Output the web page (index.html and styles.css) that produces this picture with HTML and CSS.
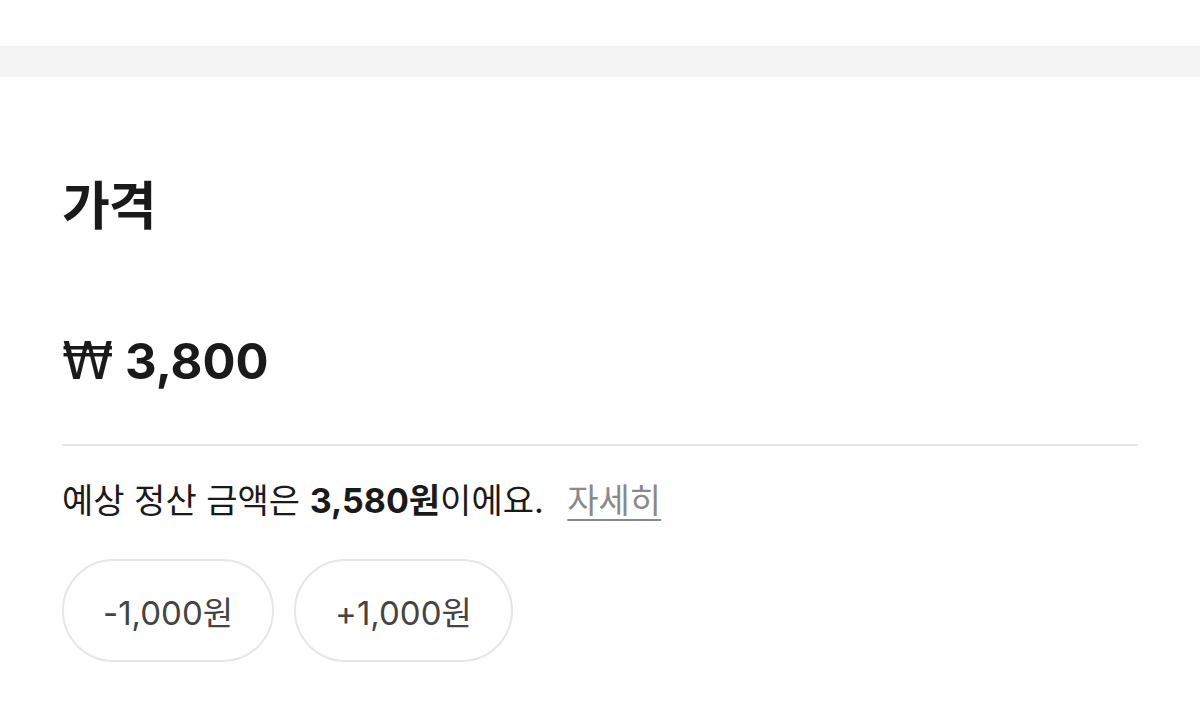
FILE: index.html
```html
<!DOCTYPE html>
<html lang="ko">
<head>
<meta charset="utf-8">
<link rel="stylesheet" href="styles.css">
</head>
<body>
<div class="top"></div>
<div class="band"></div>
<section class="price">
  <h2 class="title">가격</h2>
  <div class="amount"><span class="won">₩</span> 3,800</div>
  <hr class="divider">
  <p class="note">예상 정산 금액은 <b>3,580원</b>이에요. <a class="more" href="#">자세히</a></p>
  <div class="buttons">
    <button class="pill">-1,000원</button>
    <button class="pill">+1,000원</button>
  </div>
</section>
</body>
</html>
```
FILE: styles.css
```css
html, body { margin: 0; padding: 0; background: #fff; }
body { font-family: Inter, "Noto Sans CJK KR", sans-serif; color: #1a1a1a; width: 1200px; height: 724px; overflow: hidden; }
.top { height: 46px; }
.band { height: 31px; background: #f4f4f4; }
.price { padding: 0 62px; }
.title { margin: 0; padding-top: 98px; font-size: 52px; font-weight: 700; line-height: 64px; letter-spacing: -1px; }
.amount { margin-top: 92px; font-size: 49px; font-weight: 700; line-height: 60px; }
.won { font-family: "DejaVu Sans", sans-serif; font-weight: 400; font-size: 52px; }
.divider { margin: 52px 0 0; border: 0; height: 2px; background: #e6e6e6; }
.note { margin: 33px 0 0; font-size: 34px; line-height: 44px; color: #1a1a1a; }
.note b { font-weight: 700; }
.more { color: #8a8a8a; margin-left: 14px; text-decoration: underline; text-underline-offset: 6px; text-decoration-thickness: 2px; }
.buttons { display: flex; gap: 20px; margin-top: 36px; }
.pill { font-family: inherit; font-size: 33px; color: #444; background: #fff; border: 2px solid #e6e6e6; border-radius: 52px; height: 103px; padding: 0 39px; }
```
